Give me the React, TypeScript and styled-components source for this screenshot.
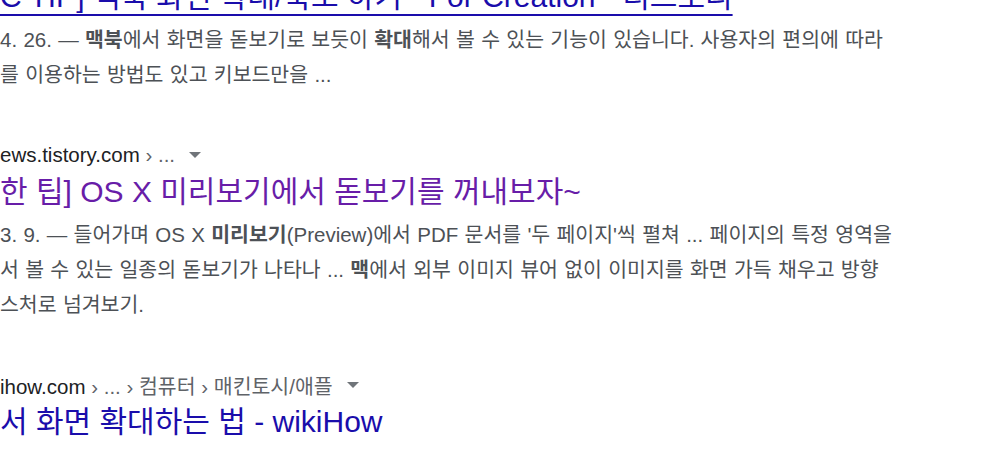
import React from "react";
import styled, { createGlobalStyle } from "styled-components";

const GlobalStyle = createGlobalStyle`
  html, body {
    margin: 0;
    padding: 0;
    background: #ffffff;
    overflow: hidden;
  }
  body {
    font-family: "Liberation Sans", "Noto Sans CJK KR", Arial, sans-serif;
  }
`;

const Page = styled.main`
  width: 1000px;
  height: 452px;
  overflow: hidden;
  background: #ffffff;
`;

const Results = styled.div`
  display: flex;
  flex-direction: column;
  gap: 47px;
  margin-top: -56px;
  width: 980px;
`;

const Result = styled.article`
  display: flex;
  flex-direction: column;
`;

const UrlRow = styled.div`
  display: flex;
  align-items: center;
  height: 32px;
  font-size: 20.5px;
  white-space: nowrap;
`;

const UrlText = styled.span`
  color: #202124;
`;

const Crumbs = styled.span`
  color: #5f6368;
`;

const MenuArrow = styled.svg`
  margin-left: 14px;
  flex: none;
`;

const Title = styled.h3<{ $visited?: boolean; $hover?: boolean }>`
  margin: 3px 0 7px 0;
  font-weight: 400;
  font-size: 30px;
  line-height: 36px;
  white-space: nowrap;
  color: ${(p) => (p.$visited ? "#681da8" : "#1a0dab")};
  text-decoration: ${(p) => (p.$hover ? "underline" : "none")};
  text-decoration-thickness: 2px;
  text-underline-offset: 7px;
  cursor: pointer;
`;

const Snippet = styled.div`
  display: flex;
  flex-direction: column;
  font-size: 20.5px;
  line-height: 35px;
  word-spacing: 0.6px;
  color: #4d5156;
`;

const Line = styled.span`
  white-space: nowrap;
  b {
    font-weight: 700;
    color: #4d5156;
  }
`;

const Arrow = () => (
  <MenuArrow width="12" height="6" viewBox="0 0 12 6" aria-hidden="true">
    <path d="M0 0 L12 0 L6 6 Z" fill="#70757a" />
  </MenuArrow>
);

export default function App() {
  return (
    <Page>
      <GlobalStyle />
      <Results>
        <Result>
          <UrlRow>
            <UrlText>
              forcreation.tistory.com<Crumbs> › ...</Crumbs>
            </UrlText>
            <Arrow />
          </UrlRow>
          <Title $hover>C TIP] 맥북 화면 확대/축소 하기 - For Creation - 티스토리</Title>
          <Snippet>
            <Line>
              4. 26. — <b>맥북</b>에서 화면을 돋보기로 보듯이 <b>확대</b>해서 볼 수 있는 기능이 있습니다. 사용자의 편의에 따라
            </Line>
            <Line>를 이용하는 방법도 있고 키보드만을 ...</Line>
          </Snippet>
        </Result>

        <Result>
          <UrlRow>
            <UrlText>
              ews.tistory.com<Crumbs> › ...</Crumbs>
            </UrlText>
            <Arrow />
          </UrlRow>
          <Title $visited>한 팁] OS X 미리보기에서 돋보기를 꺼내보자~</Title>
          <Snippet>
            <Line>
              3. 9. — 들어가며 OS X <b>미리보기</b>(Preview)에서 PDF 문서를 '두 페이지'씩 펼쳐 ... 페이지의 특정 영역을
            </Line>
            <Line>
              서 볼 수 있는 일종의 돋보기가 나타나 ... <b>맥</b>에서 외부 이미지 뷰어 없이 이미지를 화면 가득 채우고 방향
            </Line>
            <Line>스처로 넘겨보기.</Line>
          </Snippet>
        </Result>

        <Result>
          <UrlRow>
            <UrlText>
              ihow.com<Crumbs> › ... › 컴퓨터 › 매킨토시/애플</Crumbs>
            </UrlText>
            <Arrow />
          </UrlRow>
          <Title>서 화면 확대하는 법 - wikiHow</Title>
        </Result>
      </Results>
    </Page>
  );
}
